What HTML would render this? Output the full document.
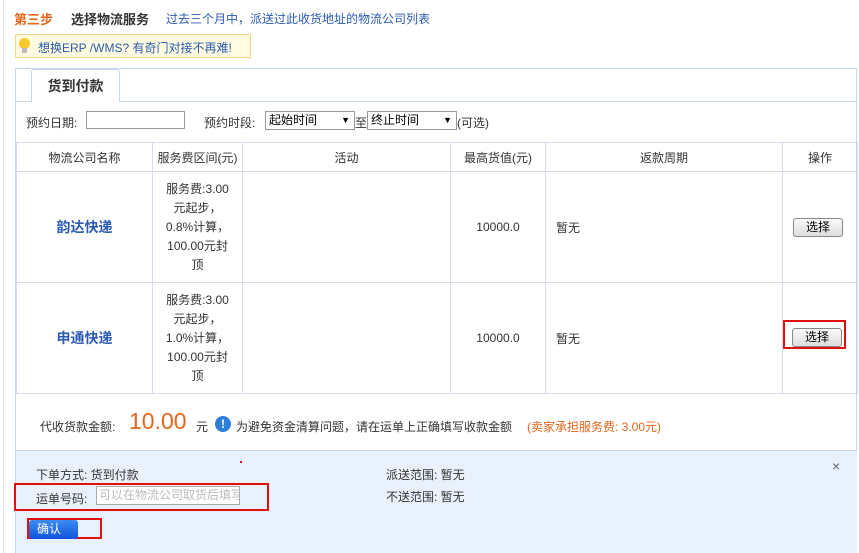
<!DOCTYPE html>
<html><head><meta charset="utf-8"><style>
*{margin:0;padding:0;box-sizing:border-box}
body{width:859px;height:553px;overflow:hidden;background:#fff;font-family:"Liberation Sans","Noto Sans CJK SC",sans-serif;font-size:12px;color:#333;position:relative}
.a{position:absolute;white-space:nowrap}
table{position:absolute;left:16px;top:142px;width:841px;border-collapse:collapse;table-layout:fixed}
td{border:1px solid #d6dde8;text-align:center;vertical-align:middle;font-size:12px;color:#333}
.sel{display:inline-block;width:50px;height:19px;border:1px solid #888;border-radius:3px;background:linear-gradient(#fafafa,#ddd);font-size:12px;line-height:17px;text-align:center;color:#000}
</style></head><body>
<div class="a" style="left:3px;top:0;width:1px;height:553px;background:#e6e6e6"></div>
<div class="a" style="left:14px;top:9px;font-size:13px;font-weight:bold;color:#e4661d">第三步</div>
<div class="a" style="left:71px;top:9px;font-size:13px;font-weight:bold;color:#333">选择物流服务</div>
<div class="a" style="left:166px;top:10px;font-size:12px;color:#2a5bb0">过去三个月中，派送过此收货地址的物流公司列表</div>
<div class="a" style="left:15px;top:34px;width:236px;height:24px;background:#fffbe0;border:1px solid #f6d58a"></div>
<div class="a" style="left:19px;top:38px;width:11px;height:11px;border-radius:50%;background:#f8c92c"></div>
<div class="a" style="left:22px;top:48px;width:5px;height:5px;background:#bbb"></div>
<div class="a" style="left:38px;top:39px;color:#2a5bb0">想换ERP /WMS? 有奇门对接不再难!</div>
<div class="a" style="left:15px;top:68px;width:842px;height:485px;border:1px solid #c6d6ec;border-bottom:none"></div>
<div class="a" style="left:16px;top:101px;width:841px;height:1px;background:#c6d6ec"></div>
<div class="a" style="left:31px;top:69px;width:89px;height:33px;border:1px solid #c6d6ec;border-bottom:none;background:#fff;border-radius:3px 3px 0 0;font-size:14px;font-weight:bold;text-align:center;line-height:32px">货到付款</div>
<div class="a" style="left:26px;top:114px">预约日期:</div>
<div class="a" style="left:86px;top:111px;width:99px;height:18px;border:1px solid #999"></div>
<div class="a" style="left:204px;top:114px">预约时段:</div>
<div class="a" style="left:265px;top:111px;width:90px;height:19px;border:1px solid #999;padding-left:3px;line-height:17px;color:#000">起始时间<span style="position:absolute;right:4px;font-size:9px">▼</span></div>
<div class="a" style="left:355px;top:114px">至</div>
<div class="a" style="left:367px;top:111px;width:90px;height:19px;border:1px solid #999;padding-left:3px;line-height:17px;color:#000">终止时间<span style="position:absolute;right:4px;font-size:9px">▼</span></div>
<div class="a" style="left:457px;top:114px">(可选)</div>
<table>
<colgroup><col style="width:136px"><col style="width:90px"><col style="width:208px"><col style="width:95px"><col style="width:237px"><col style="width:75px"></colgroup>
<tr style="height:29px"><td>物流公司名称</td><td>服务费区间(元)</td><td>活动</td><td>最高货值(元)</td><td>返款周期</td><td>操作</td></tr>
<tr style="height:111px"><td style="color:#2a5bb0;font-size:14px;font-weight:bold">韵达快递</td><td style="line-height:19px">服务费:3.00<br>元起步，<br>0.8%计算，<br>100.00元封<br>顶</td><td></td><td>10000.0</td><td style="text-align:left;padding-left:10px">暂无</td><td style="padding-right:4px"><span class="sel">选择</span></td></tr>
<tr style="height:111px"><td style="color:#2a5bb0;font-size:14px;font-weight:bold">申通快递</td><td style="line-height:19px">服务费:3.00<br>元起步，<br>1.0%计算，<br>100.00元封<br>顶</td><td></td><td>10000.0</td><td style="text-align:left;padding-left:10px">暂无</td><td></td></tr>
</table>
<div class="a" style="left:783px;top:320px;width:63px;height:29px;border:2px solid #e01010"></div>
<div class="a sel" style="left:792px;top:328px">选择</div>
<div class="a" style="left:40px;top:418px">代收货款金额:</div>
<div class="a" style="left:129px;top:408px;font-size:23px;color:#e4661d">10.00</div>
<div class="a" style="left:196px;top:418px">元</div>
<div class="a" style="left:215px;top:416px;width:16px;height:16px;border-radius:50%;background:#2b7fd8;color:#fff;font-weight:bold;text-align:center;line-height:16px;font-size:12px">!</div>
<div class="a" style="left:236px;top:418px">为避免资金清算问题，请在运单上正确填写收款金额</div>
<div class="a" style="left:527px;top:418px;color:#e4661d">(卖家承担服务费: 3.00元)</div>
<div class="a" style="left:16px;top:450px;width:841px;height:103px;background:#e9f1fc;border-top:1px solid #c6d6ec"></div>
<div class="a" style="left:36px;top:466px">下单方式: 货到付款</div>
<div class="a" style="left:386px;top:466px">派送范围: 暂无</div>
<div class="a" style="left:386px;top:488px">不送范围: 暂无</div>
<div class="a" style="left:832px;top:458px;font-size:14px;color:#666">×</div>
<div class="a" style="left:240px;top:461px;width:2px;height:2px;background:#e01010"></div>
<div class="a" style="left:14px;top:483px;width:255px;height:28px;border:2px solid #e01010"></div>
<div class="a" style="left:36px;top:490px">运单号码:</div>
<div class="a" style="left:96px;top:486px;width:144px;height:19px;border:1px solid #aaa;background:#fff;color:#bbb;line-height:17px;padding-left:2px;overflow:hidden">可以在物流公司取货后填写</div>
<div class="a" style="left:27px;top:518px;width:75px;height:21px;border:2px solid #e01010"></div>
<div class="a" style="left:29px;top:520px;width:49px;height:19px;background:linear-gradient(#3d8bf5,#0f55d8);border-radius:3px;color:#fff;line-height:19px;padding-left:8px">确认</div>
</body></html>
